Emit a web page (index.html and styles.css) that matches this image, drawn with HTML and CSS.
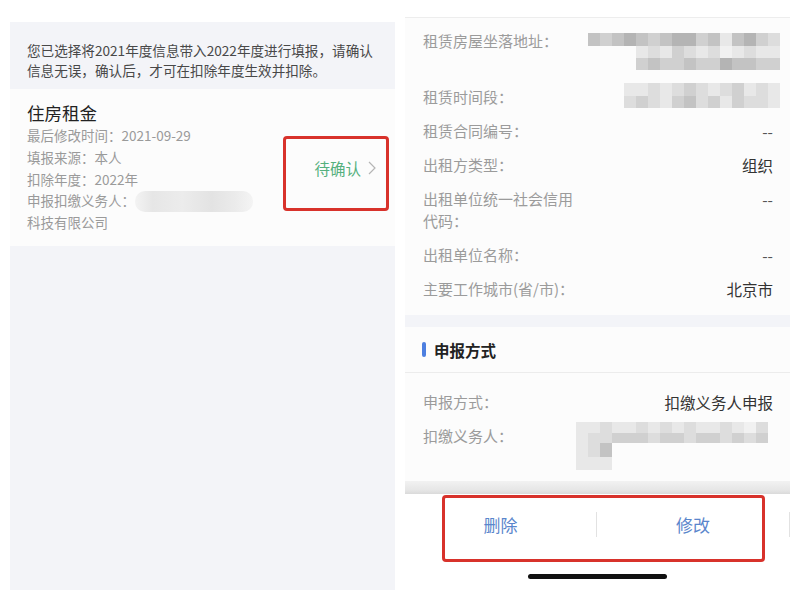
FILE: index.html
```html
<!DOCTYPE html>
<html lang="zh-CN">
<head>
<meta charset="utf-8">
<title>住房租金</title>
<link rel="stylesheet" href="styles.css">
</head>
<body>
<div class="page">
  <section class="phone left">
    <div class="status-l"></div>
    <div class="notice">您已选择将2021年度信息带入2022年度进行填报，请确认<br>信息无误，确认后，才可在扣除年度生效并扣除。</div>
    <div class="card">
      <div class="info">
        <h2 class="title">住房租金</h2>
        <p class="detail">最后修改时间：2021-09-29</p>
        <p class="detail">填报来源：本人</p>
        <p class="detail">扣除年度：2022年</p>
        <p class="detail">申报扣缴义务人：<span class="smudge"></span></p>
        <p class="detail">科技有限公司</p>
      </div>
      <div class="state">待确认<svg class="chev" width="8" height="14" viewBox="0 0 8 14"><polyline points="1,1 7,7 1,13" fill="none" stroke="#b5b5b5" stroke-width="1.2"/></svg></div>
      <div class="mark mark-state"></div>
    </div>
    <div class="fill"></div>
  </section>

  <section class="phone right">
    <div class="status-r"></div>
    <div class="rows">
      <div class="row row-addr">
        <span class="label">租赁房屋坐落地址：</span>
        <div class="mosaic addr">
          <div class="mrow"><span class="g2"></span><span class="g3"></span><span class="g2"></span><span class="g1"></span><span class="g2"></span><span class="g3"></span><span class="g2"></span><span class="g1"></span><span class="g1"></span><span class="g3"></span><span class="g2"></span><span class="g5"></span><span class="g2"></span><span class="g1"></span><span class="g3"></span><span class="g4"></span></div>
          <div class="mrow"><span class="g5"></span><span class="g4"></span><span class="g5"></span><span class="g3"></span><span class="g4"></span><span class="g5"></span><span class="g4"></span><span class="g6"></span><span class="g5"></span><span class="g4"></span><span class="g5"></span><span class="g5"></span></div>
          <div class="mrow"><span class="g3"></span><span class="g2"></span><span class="g3"></span><span class="g3"></span><span class="g2"></span><span class="g3"></span><span class="g3"></span><span class="g1"></span><span class="g2"></span><span class="g2"></span><span class="g3"></span><span class="g3"></span></div>
        </div>
      </div>
      <div class="row">
        <span class="label">租赁时间段：</span>
        <div class="mosaic period">
          <div class="mrow"><span class="g5"></span><span class="g5"></span><span class="g4"></span><span class="g5"></span><span class="g4"></span><span class="g3"></span><span class="g4"></span><span class="g5"></span><span class="g4"></span><span class="g3"></span><span class="g5"></span><span class="g4"></span><span class="g5"></span></div>
          <div class="mrow"><span class="g4"></span><span class="g3"></span><span class="g4"></span><span class="g5"></span><span class="g3"></span><span class="g2"></span><span class="g4"></span><span class="g3"></span><span class="g5"></span><span class="g3"></span><span class="g4"></span><span class="g4"></span><span class="g5"></span></div>
        </div>
      </div>
      <div class="row"><span class="label">租赁合同编号：</span><span class="value dash">--</span></div>
      <div class="row"><span class="label">出租方类型：</span><span class="value">组织</span></div>
      <div class="row"><span class="label">出租单位统一社会信用代码：</span><span class="value dash">--</span></div>
      <div class="row"><span class="label">出租单位名称：</span><span class="value dash">--</span></div>
      <div class="row"><span class="label">主要工作城市(省/市)：</span><span class="value">北京市</span></div>
    </div>
    <div class="band"></div>
    <div class="sec-head">申报方式</div>
    <div class="rows rows-2">
      <div class="row"><span class="label">申报方式：</span><span class="value">扣缴义务人申报</span></div>
      <div class="row">
        <span class="label">扣缴义务人：</span>
        <div class="mosaic agent">
          <div class="mrow"><span class="g5"></span><span class="g5"></span><span class="g4"></span><span class="g5"></span><span class="g5"></span><span class="g4"></span><span class="g5"></span><span class="g4"></span><span class="g5"></span><span class="g4"></span><span class="g5"></span><span class="g5"></span><span class="g4"></span><span class="g5"></span><span class="g6"></span><span class="g4"></span></div>
          <div class="mrow"><span class="g5"></span><span class="g4"></span><span class="g4"></span><span class="g3"></span><span class="g3"></span><span class="g3"></span><span class="g4"></span><span class="g3"></span><span class="g3"></span><span class="g4"></span><span class="g3"></span><span class="g3"></span><span class="g4"></span><span class="g3"></span><span class="g4"></span><span class="g3"></span></div>
          <div class="mrow"><span class="g5"></span><span class="g4"></span><span class="g2"></span></div>
          <div class="mrow"><span class="g5"></span><span class="g5"></span><span class="g5"></span></div>
        </div>
      </div>
    </div>
    <div class="shadow"></div>
    <div class="actions">
      <button class="btn">删除</button>
      <span class="divider"></span>
      <button class="btn">修改</button>
      <span class="divider"></span>
      <div class="mark mark-actions"></div>
    </div>
    <div class="home"><span class="home-bar"></span></div>
  </section>
</div>
</body>
</html>
```

FILE: styles.css
```css
* { box-sizing: border-box; }
html, body { margin: 0; padding: 0; }
body {
  width: 800px;
  height: 600px;
  overflow: hidden;
  background: #ffffff;
  font-family: "Noto Sans CJK SC", "Noto Sans", sans-serif;
}
.page {
  display: flex;
  gap: 10px;
  padding-left: 10px;
  height: 600px;
}
.phone {
  width: 385px;
  flex: none;
  display: flex;
  flex-direction: column;
}

/* ---------- left ---------- */
.left { height: 590px; }
.status-l { height: 22px; background: #fff; }
.notice {
  height: 67px;
  background: #f3f4f8;
  padding: 18px 0 0 17px;
  font-size: 13.6px;
  line-height: 20px;
  color: #484848;
  white-space: nowrap;
}
.card {
  position: relative;
  height: 157px;
  background: #fcfcfc;
  display: flex;
  align-items: center;
  justify-content: space-between;
  padding: 0 19px 0 17px;
}
.info { align-self: flex-start; padding-top: 12px; }
.title {
  margin: 0;
  font-size: 17.5px;
  line-height: 24px;
  font-weight: 400;
  color: #222;
}
.detail {
  margin: 0;
  height: 21.8px;
  font-size: 13.5px;
  line-height: 21.8px;
  color: #9a9a9a;
  white-space: nowrap;
}
.smudge {
  display: inline-block;
  width: 118px;
  height: 21px;
  vertical-align: -6px;
  margin-top: -6px;
  border-radius: 10px;
  background: linear-gradient(90deg, #f3f3f3 0%, #e6e6e6 15%, #ececec 40%, #e3e3e3 65%, #ebebeb 85%, #f4f4f4 100%);
}
.state {
  display: flex;
  align-items: center;
  gap: 7px;
  font-size: 15.5px;
  color: #55b07e;
}
.chev { display: block; }
.fill { flex: 1; background: #f3f4f8; }

.mark {
  position: absolute;
  border: 3px solid #d8322b;
  border-radius: 4px;
}
.mark-state { left: 273px; top: 47px; width: 106px; height: 75px; }

/* ---------- right ---------- */
.status-r { height: 18px; background: #fff; border-bottom: 1px solid #ededed; }
.rows {
  background: #fcfcfc;
  padding: 6px 17px 9px 18px;
}
.rows-2 { padding-top: 12px; padding-bottom: 8px; }
.row {
  display: flex;
  justify-content: space-between;
  align-items: flex-start;
  padding: 6px 0;
  font-size: 15px;
  line-height: 22px;
}
.label { color: #9b9b9b; max-width: 158px; }
.value { color: #333; text-align: right; white-space: nowrap; font-size: 15.5px; }
.dash { color: #555; }

.mosaic { display: flex; flex-direction: column; align-items: flex-end; }
.mrow { display: flex; }
.mrow span { width: 12px; height: 12px; }
.addr { height: 44px; padding-top: 3px; margin-right: -7px; }
.addr .mrow:first-child span { height: 13px; }
.period { height: 25px; margin: -3px -7px -3px 0; }
.period .mrow span { height: 12.5px; }
.agent { height: 48px; margin-top: -3px; margin-bottom: -3px; margin-right: 5px; align-items: flex-start; }
.agent .mrow span { height: 10.5px; }
.agent .mrow:nth-child(3) span, .agent .mrow:nth-child(4) span { height: 13.5px; }

.g1 { background: #b4b4b4; }
.g2 { background: #c3c3c3; }
.g3 { background: #d0d0d0; }
.g4 { background: #dddddd; }
.g5 { background: #e8e8e8; }
.g6 { background: #f1f1f1; }

.band { height: 12px; background: #f3f4f8; }
.sec-head {
  height: 46px;
  display: flex;
  align-items: center;
  gap: 8px;
  padding-left: 17px;
  background: #fcfcfc;
  border-bottom: 1px solid #ececec;
  font-size: 15.5px;
  font-weight: 700;
  color: #222;
}
.sec-head::before {
  content: "";
  width: 4px;
  height: 15px;
  border-radius: 2px;
  background: #4d7fe0;
}

.shadow {
  height: 13px;
  background: linear-gradient(180deg, #f2f2f2 0%, #e6e6e6 70%, #dadada 100%);
}
.actions {
  position: relative;
  height: 60px;
  display: flex;
  align-items: center;
  background: #fff;
}
.btn {
  flex: none;
  width: 191px;
  height: 60px;
  border: 0;
  background: transparent;
  padding: 0;
  font-family: inherit;
  font-size: 17px;
  color: #5a86cc;
}
.btn + .divider + .btn { width: 192px; }
.divider { width: 1px; height: 25px; background: #e2e2e2; }
.mark-actions { left: 37px; top: 1px; width: 323px; height: 67px; }

.home { flex: 1; background: #fff; display: flex; justify-content: center; padding-top: 20px; }
.home-bar { width: 139px; height: 5px; border-radius: 3px; background: #111; }
```
